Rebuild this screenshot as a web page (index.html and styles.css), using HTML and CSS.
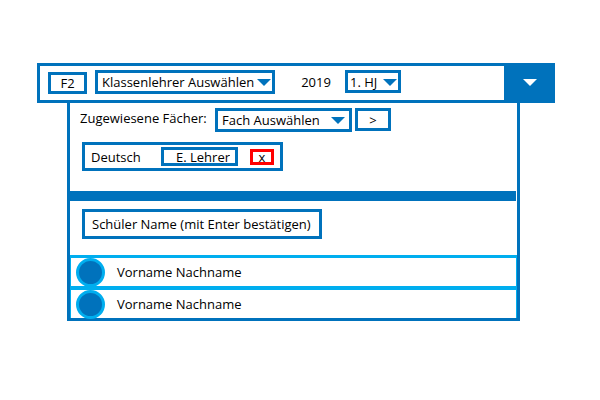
FILE: index.html
```html
<!DOCTYPE html>
<html lang="de">
<head>
<meta charset="utf-8">
<meta name="viewport" content="width=device-width, initial-scale=1">
<title>Klassenverwaltung</title>
<link rel="stylesheet" href="styles.css">
</head>
<body>
<main class="class-card">
  <header class="class-header">
    <div class="header-fields">
      <input class="box class-name" type="text" value="F2" aria-label="Klasse">
      <div class="select teacher-select">
        <select class="box" aria-label="Klassenlehrer"><option>Klassenlehrer Auswählen</option></select>
        <svg class="arrow" viewBox="0 0 14 7" aria-hidden="true"><path d="M0 0H14L7 7Z"/></svg>
      </div>
      <span class="year">2019</span>
      <div class="select term-select">
        <select class="box" aria-label="Halbjahr"><option>1. HJ</option></select>
        <svg class="arrow" viewBox="0 0 14 7" aria-hidden="true"><path d="M0 0H14L7 7Z"/></svg>
      </div>
    </div>
    <button class="toggle" type="button" aria-label="Details umschalten">
      <svg class="toggle-arrow" viewBox="0 0 14 7" aria-hidden="true"><path d="M0 0H14L7 7Z"/></svg>
    </button>
  </header>
  <section class="details">
    <div class="subjects">
      <div class="subject-picker">
        <label class="picker-label" for="subject">Zugewiesene Fächer:</label>
        <div class="select subject-select">
          <select class="box" id="subject"><option>Fach Auswählen</option></select>
          <svg class="arrow" viewBox="0 0 14 7" aria-hidden="true"><path d="M0 0H14L7 7Z"/></svg>
        </div>
        <button class="box add" type="button" aria-label="Fach hinzufügen">&gt;</button>
      </div>
      <div class="assigned">
        <span class="subject-name">Deutsch</span>
        <input class="box subject-teacher" type="text" value="E. Lehrer" aria-label="Lehrer für Deutsch">
        <button class="box remove" type="button" aria-label="Deutsch entfernen">x</button>
      </div>
    </div>
    <div class="new-student">
      <input class="box student-input" type="text" placeholder="Schüler Name (mit Enter bestätigen)" aria-label="Schüler Name">
    </div>
    <ul class="students">
      <li class="student"><span class="avatar"></span>Vorname Nachname</li>
      <li class="student"><span class="avatar"></span>Vorname Nachname</li>
    </ul>
  </section>
</main>
</body>
</html>
```
FILE: styles.css
```css
:root {
  --blue: #0072bc;
  --sky: #00aeef;
}

* {
  box-sizing: border-box;
}

body {
  margin: 0;
  padding: 63px 45px 24px 37px;
  background: #fff;
  color: #000;
  font: 13px/18px "Open Sans", "Noto Sans", sans-serif;
}

input,
select,
button {
  margin: 0;
  color: inherit;
  font: inherit;
}

.box {
  display: block;
  height: 24px;
  padding: 0;
  border: 3px solid var(--blue);
  border-radius: 0;
  background: #fff;
}

.select {
  position: relative;
}

.select .box {
  width: 100%;
  padding: 0 16px 0 4px;
  appearance: none;
}

.arrow {
  position: absolute;
  top: 9px;
  right: 4px;
  width: 14px;
  height: 7px;
  fill: var(--blue);
  pointer-events: none;
}

.class-header {
  display: flex;
  border: 3px solid var(--blue);
}

.header-fields {
  display: flex;
  flex: 1;
  align-items: flex-start;
  padding: 4px 8px 6px;
}

.class-name {
  width: 39px;
  height: 22px;
  margin: 2px 8px 0 0;
  text-align: center;
}

.teacher-select {
  width: 180px;
}

.year {
  width: 70px;
  padding: 3px 0 0 12px;
  text-align: center;
}

.term-select {
  width: 56px;
}

.term-select .box {
  height: 23px;
  padding: 0 16px 0 2px;
}

.toggle {
  display: flex;
  align-items: center;
  justify-content: center;
  width: 48px;
  padding: 0 0 2px 4px;
  border: 0;
  background: var(--blue);
}

.toggle-arrow {
  width: 14px;
  height: 7px;
  fill: #fff;
}

.details {
  margin: 0 35px 0 30px;
  border: 3px solid var(--blue);
  border-top: 0;
}

.subjects {
  margin-right: 1px;
  padding: 5px 10px 20px;
  border-bottom: 10px solid var(--blue);
}

.subject-picker {
  display: flex;
  align-items: flex-start;
  margin-bottom: 10px;
}

.picker-label {
  width: 135px;
  padding-top: 1px;
}

.subject-select {
  width: 137px;
  margin-right: 3px;
}

.subject-select .arrow {
  right: 7px;
}

.add {
  width: 36px;
  height: 23px;
}

.assigned {
  display: flex;
  align-items: center;
  width: 201px;
  height: 29px;
  margin-left: 2px;
  padding: 0 6px;
  border: 3px solid var(--blue);
}

.subject-name {
  width: 70px;
}

.subject-teacher {
  width: 77px;
  height: 19px;
  margin-right: 12px;
  padding-right: 5px;
  text-align: right;
}

.remove {
  width: 24px;
  height: 16px;
  border-color: #f00;
  line-height: 10px;
}

.new-student {
  padding: 8px 12px 16px;
}

.student-input {
  width: 240px;
  height: 30px;
  padding: 0 7px;
}

.student-input::placeholder {
  color: #000;
  opacity: 1;
}

.students {
  margin: 0;
  padding: 0;
  border: solid var(--sky);
  border-width: 3px 1px 0;
  list-style: none;
}

.student {
  display: flex;
  align-items: center;
  gap: 12px;
  height: 28px;
  padding-left: 5px;
}

.student + .student {
  height: 32px;
  border-top: 4px solid var(--sky);
}

.avatar {
  width: 29px;
  height: 29px;
  border: 3px solid var(--sky);
  border-radius: 50%;
  background: var(--blue);
}
```
